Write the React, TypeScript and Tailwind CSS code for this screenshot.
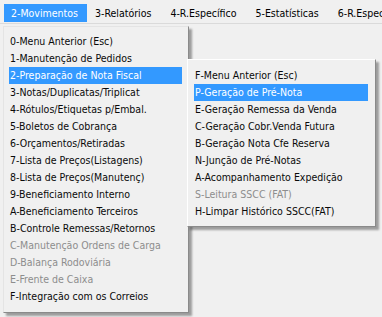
const barItems = [
  "2-Movimentos",
  "3-Relatórios",
  "4-R.Específico",
  "5-Estatísticas",
  "6-R.Específico",
];

const mainItems = [
  { label: "0-Menu Anterior (Esc)" },
  { label: "1-Manutenção de Pedidos" },
  { label: "2-Preparação de Nota Fiscal", active: true },
  { label: "3-Notas/Duplicatas/Triplicat" },
  { label: "4-Rótulos/Etiquetas p/Embal." },
  { label: "5-Boletos de Cobrança" },
  { label: "6-Orçamentos/Retiradas" },
  { label: "7-Lista de Preços(Listagens)" },
  { label: "8-Lista de Preços(Manutenç)" },
  { label: "9-Beneficiamento Interno" },
  { label: "A-Beneficiamento Terceiros" },
  { label: "B-Controle Remessas/Retornos" },
  { label: "C-Manutenção Ordens de Carga", disabled: true },
  { label: "D-Balança Rodoviária", disabled: true },
  { label: "E-Frente de Caixa", disabled: true },
  { label: "F-Integração com os Correios" },
];

const subItems = [
  { label: "F-Menu Anterior (Esc)" },
  { label: "P-Geração de Pré-Nota", active: true },
  { label: "E-Geração Remessa da Venda" },
  { label: "C-Geração Cobr.Venda Futura" },
  { label: "B-Geração Nota Cfe Reserva" },
  { label: "N-Junção de Pré-Notas" },
  { label: "A-Acompanhamento Expedição" },
  { label: "S-Leitura SSCC (FAT)", disabled: true },
  { label: "H-Limpar Histórico SSCC(FAT)" },
];

type Item = { label: string; active?: boolean; disabled?: boolean };

function MenuRow({ item }: { item: Item }) {
  return (
    <div
      className={[
        "h-[17px] whitespace-nowrap pl-[1px] leading-[17px]",
        item.active
          ? "bg-[#3399ff] text-white"
          : item.disabled
            ? "text-[#8d8d8d]"
            : "text-[#0a0a0a]",
      ].join(" ")}
    >
      {item.label}
    </div>
  );
}

export default function App() {
  return (
    <div
      className="relative h-[317px] w-[382px] overflow-hidden bg-[#f0f0f0] font-stretch-condensed text-[10.5px]"
      style={{ fontFamily: "'DejaVu Sans', 'Liberation Sans', sans-serif" }}
    >
      <div className="flex h-[24px] items-end border-b border-[#dadada] pl-[4px]">
        {barItems.map((label, i) => (
          <div
            key={label}
            className={[
              "mb-[1px] h-[18px] whitespace-nowrap leading-[18px]",
              i === 0 ? "bg-[#3399ff] pl-[7px] pr-[9px] text-white" : "pl-[8px] pr-[11px] text-black",
            ].join(" ")}
          >
            {label}
          </div>
        ))}
      </div>

      <div className="absolute left-[3px] top-[26px] w-[186px] border border-t-[#e4e4e4] border-l-[#e4e4e4] border-r-[#8a8a8a] border-b-[#8a8a8a] bg-[#f0f0f0] pb-[7px] pl-[5px] pr-[6px] pt-[6px] shadow-[3px_3px_2px_rgba(0,0,0,0.35)]">
        {mainItems.map((item) => (
          <MenuRow key={item.label} item={item} />
        ))}
      </div>

      <div className="absolute left-[187px] top-[59px] w-[189px] border border-t-[#ffffff] border-l-[#ffffff] border-r-[#8a8a8a] border-b-[#8a8a8a] bg-[#f0f0f0] pb-[6px] pl-[6px] pr-[7px] pt-[7px] shadow-[3px_3px_2px_rgba(0,0,0,0.35)]">
        {subItems.map((item) => (
          <MenuRow key={item.label} item={item} />
        ))}
      </div>
    </div>
  );
}
